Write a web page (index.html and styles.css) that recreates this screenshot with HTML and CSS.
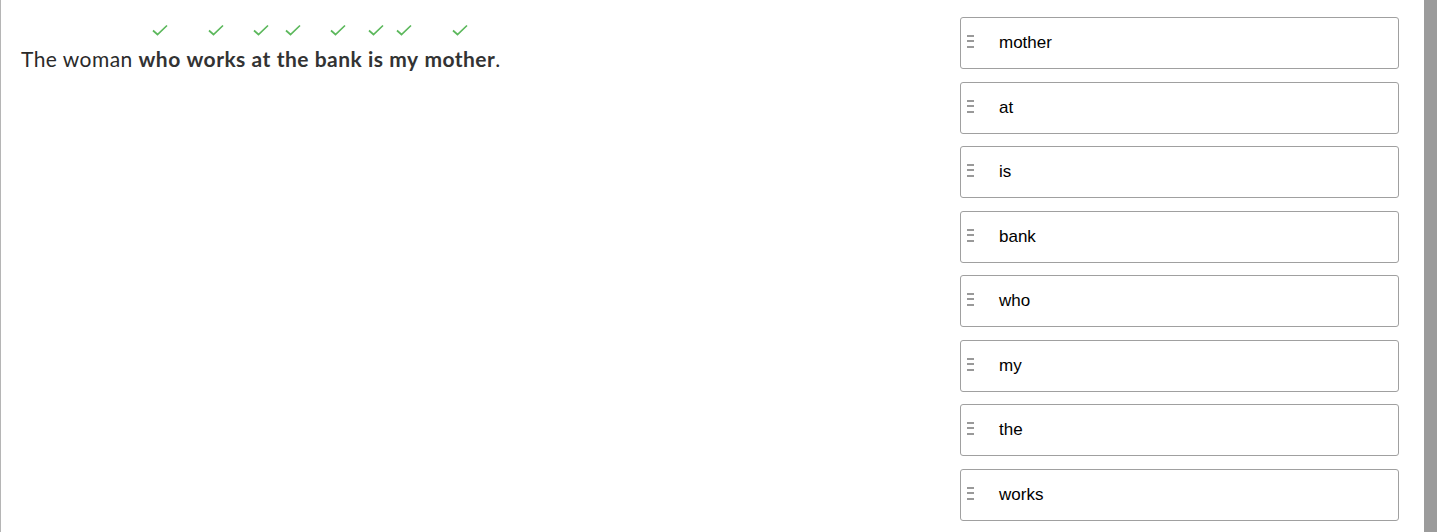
FILE: index.html
```html
<!DOCTYPE html>
<html>
<head>
<meta charset="utf-8">
<link rel="stylesheet" href="styles.css">
</head>
<body>
<div class="page">
  <div class="question">
    <p class="sentence">The woman <span class="word">who</span> <span class="word">works</span> <span class="word">at</span> <span class="word">the</span> <span class="word">bank</span> <span class="word">is</span> <span class="word">my</span> <span class="word">mother</span>.</p>
  </div>
  <div class="list">
    <div class="item"><span class="handle"></span><span class="label">mother</span></div>
    <div class="item"><span class="handle"></span><span class="label">at</span></div>
    <div class="item"><span class="handle"></span><span class="label">is</span></div>
    <div class="item"><span class="handle"></span><span class="label">bank</span></div>
    <div class="item"><span class="handle"></span><span class="label">who</span></div>
    <div class="item"><span class="handle"></span><span class="label">my</span></div>
    <div class="item"><span class="handle"></span><span class="label">the</span></div>
    <div class="item"><span class="handle"></span><span class="label">works</span></div>
  </div>
  <div class="scrollbar"></div>
</div>
</body>
</html>
```
FILE: styles.css
```css
html, body {
  margin: 0;
  padding: 0;
  background: #fff;
}
body {
  height: 532px;
  overflow: hidden;
  border-left: 1px solid #b5b5b5;
  box-sizing: border-box;
}
.page {
  display: flex;
  height: 532px;
}
.question {
  flex: 1;
  padding: 45px 0 0 20px;
}
.sentence {
  margin: 0;
  font-family: Lato, "Liberation Sans", sans-serif;
  font-size: 21px;
  letter-spacing: 0.45px;
  line-height: 28px;
  color: #2a2a2a;
}
.word {
  position: relative;
  font-weight: bold;
  color: #333;
}
.word::before {
  content: "";
  position: absolute;
  left: 50%;
  top: -22px;
  width: 16px;
  height: 12px;
  margin-left: -8px;
  background: url("data:image/svg+xml,%3Csvg xmlns='http://www.w3.org/2000/svg' width='16' height='12' viewBox='0 0 16 12'%3E%3Cpath d='M1 6.5 L5.5 10.5 L15 1.5' fill='none' stroke='%235cb85c' stroke-width='1.7'/%3E%3C/svg%3E") no-repeat center;
}
.list {
  width: 439px;
  padding-top: 17px;
  display: flex;
  flex-direction: column;
  gap: 12.5px;
}
.item {
  height: 52px;
  box-sizing: border-box;
  border: 1px solid #a0a0a0;
  border-radius: 3px;
  display: flex;
  align-items: center;
  padding-left: 6px;
  font-family: "Liberation Sans", Arial, sans-serif;
  font-size: 17px;
  color: #000;
}
.handle {
  width: 7px;
  height: 2px;
  margin-right: 25px;
  margin-bottom: 14px;
  background: #999;
  box-shadow: 0 5px 0 #999, 0 11px 0 #999;
}
.scrollbar {
  width: 13px;
  margin-left: 25px;
  background: #9b9b9b;
}
```
